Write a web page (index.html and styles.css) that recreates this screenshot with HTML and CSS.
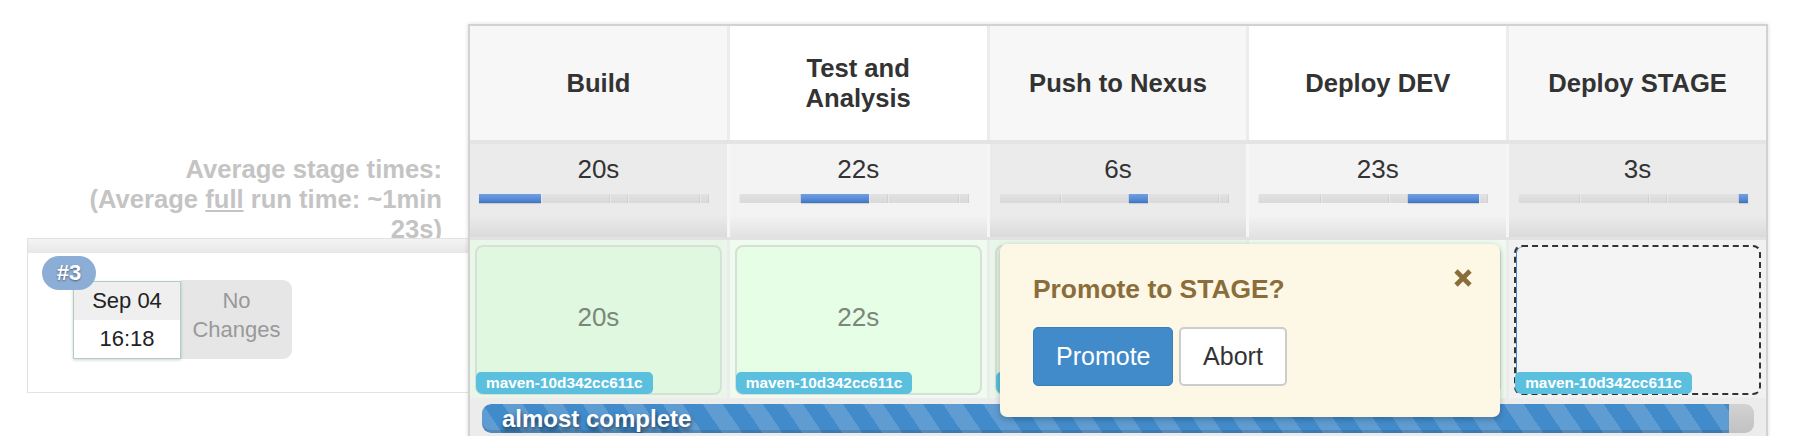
FILE: index.html
```html
<!DOCTYPE html>
<html>
<head>
<meta charset="utf-8">
<link rel="stylesheet" href="styles.css">
</head>
<body>
<div class="page">
  <div class="side">
    <div class="side-label">
      <div>Average stage times:</div>
      <div>(Average <span class="u">full</span> run time: ~1min 23s)</div>
    </div>
    <div class="run">
      <span class="run-badge">#3</span>
      <div class="run-body">
        <div class="date">
          <div class="date-day">Sep 04</div>
          <div class="date-time">16:18</div>
        </div>
        <div class="changes">No<br>Changes</div>
      </div>
    </div>
  </div>

  <div class="table">
    <div class="row head">
      <div class="hcell odd">Build</div>
      <div class="hcell even">Test and Analysis</div>
      <div class="hcell odd">Push to Nexus</div>
      <div class="hcell even">Deploy DEV</div>
      <div class="hcell odd">Deploy STAGE</div>
    </div>

    <div class="row times">
      <div class="tcell odd">
        <div class="tval">20s</div>
        <div class="track"><span class="seg cur" style="flex:20"></span><span class="seg" style="flex:22"></span><span class="seg" style="flex:6"></span><span class="seg" style="flex:23"></span><span class="seg" style="flex:3"></span></div>
      </div>
      <div class="tcell even">
        <div class="tval">22s</div>
        <div class="track"><span class="seg" style="flex:20"></span><span class="seg cur" style="flex:22"></span><span class="seg" style="flex:6"></span><span class="seg" style="flex:23"></span><span class="seg" style="flex:3"></span></div>
      </div>
      <div class="tcell odd">
        <div class="tval">6s</div>
        <div class="track"><span class="seg" style="flex:20"></span><span class="seg" style="flex:22"></span><span class="seg cur" style="flex:6"></span><span class="seg" style="flex:23"></span><span class="seg" style="flex:3"></span></div>
      </div>
      <div class="tcell even">
        <div class="tval">23s</div>
        <div class="track"><span class="seg" style="flex:20"></span><span class="seg" style="flex:22"></span><span class="seg" style="flex:6"></span><span class="seg cur" style="flex:23"></span><span class="seg" style="flex:3"></span></div>
      </div>
      <div class="tcell odd">
        <div class="tval">3s</div>
        <div class="track"><span class="seg" style="flex:20"></span><span class="seg" style="flex:22"></span><span class="seg" style="flex:6"></span><span class="seg" style="flex:23"></span><span class="seg cur" style="flex:3"></span></div>
      </div>
    </div>

    <div class="row cells">
      <div class="ccell odd"><div class="card ok"><span class="card-time">20s</span><span class="agent">maven-10d342cc611c</span></div></div>
      <div class="ccell even"><div class="card ok"><span class="card-time">22s</span><span class="agent">maven-10d342cc611c</span></div></div>
      <div class="ccell odd"><div class="card ok"><span class="card-time">6s</span><span class="agent">maven-10d342cc611c</span></div></div>
      <div class="ccell even"><div class="card ok"><span class="card-time">23s</span><span class="agent">maven-10d342cc611c</span></div></div>
      <div class="ccell pending-cell"><div class="card pending"><span class="agent">maven-10d342cc611c</span></div></div>
    </div>

    <div class="row barrow">
      <div class="progress">
        <div class="progress-fill" style="width:98%"><span class="progress-text">almost complete</span></div>
      </div>
    </div>

    <div class="popup">
      <div class="popup-title">Promote to STAGE?</div>
      <div class="popup-buttons">
        <button class="btn btn-primary">Promote</button>
        <button class="btn btn-default">Abort</button>
      </div>
      <svg class="popup-close" width="20" height="20" viewBox="0 0 20 20"><path d="M3 3 L17 17 M17 3 L3 17" stroke="#8a6d3b" stroke-width="4.6" fill="none"/></svg>
    </div>
  </div>
</div>
</body>
</html>
```

FILE: styles.css
```css
* { box-sizing: border-box; }
html, body { margin: 0; padding: 0; background: #fff; }
body {
  font-family: "Liberation Sans", Arial, sans-serif;
  color: #333;
  overflow: hidden;
  width: 1808px;
  height: 436px;
}

.page {
  display: flex;
  align-items: flex-start;
  padding-top: 24px;
}

/* left side */
.side {
  width: 468px;
  flex: none;
  padding-top: 130px;
}
.side-label {
  width: 380px;
  height: 84px;
  margin-left: auto;
  margin-right: 26px;
  text-align: right;
  font-weight: bold;
  font-size: 25.6px;
  line-height: 30px;
  color: #c4c4c4;
}
.side-label .u { text-decoration: underline; }

.run {
  position: relative;
  margin-left: 27px;
  width: 441px;
  height: 155px;
  border: 1px solid #e2e2e2;
  border-right: none;
  background: linear-gradient(#f4f4f4, #e7e7e7) top left / 100% 14px no-repeat, #fff;
}
.run-badge {
  position: absolute;
  left: 14px;
  top: 17px;
  width: 54px;
  height: 34px;
  border-radius: 17px;
  background: #8cadd5;
  color: #fff;
  font-weight: bold;
  font-size: 22px;
  line-height: 34px;
  text-align: center;
  text-shadow: 0 1px 2px rgba(0,0,0,.45);
  z-index: 2;
}
.run-body {
  display: flex;
  align-items: flex-start;
  padding-top: 42px;
  padding-left: 45px;
}
.date {
  width: 108px;
  border: 1px solid #a8d2ba;
  box-shadow: 0 1px 3px rgba(0,0,0,.18);
  font-size: 22px;
  text-align: center;
  color: #222;
  position: relative;
  z-index: 1;
}
.date-day {
  height: 38px;
  line-height: 38px;
  background: #efefef;
}
.date-time {
  height: 38px;
  line-height: 38px;
  background: #fff;
}
.changes {
  width: 111px;
  height: 79px;
  margin-top: -1px;
  padding-bottom: 10px;
  background: #e6e6e6;
  border-radius: 0 9px 9px 0;
  color: #999;
  font-size: 22px;
  line-height: 29px;
  text-align: center;
  display: flex;
  flex-direction: column;
  justify-content: center;
}

/* stage table */
.table {
  position: relative;
  width: 1300px;
  flex: none;
  border: 2px solid #d2d2d2;
  border-bottom: none;
  box-shadow: 0 0 4px rgba(0,0,0,.15);
  background: #ececec;
}
.row {
  display: grid;
  grid-template-columns: repeat(5, 1fr);
  column-gap: 3px;
}

.head {
  height: 118px;
  border-bottom: 4px solid #e4e4e4;
  background: #ececec;
}
.hcell {
  display: flex;
  align-items: center;
  justify-content: center;
  text-align: center;
  padding: 0 30px;
  font-weight: bold;
  font-size: 25.6px;
  line-height: 30px;
  color: #333;
}
.hcell.odd { background: #f7f7f7; }
.hcell.even { background: #fff; }

.times {
  height: 96px;
  border-bottom: 3px solid #e2e2e2;
  background: #f6f6f6;
}
.tcell {
  padding-top: 10px;
  background-image: linear-gradient(to bottom, rgba(0,0,0,0) 76%, rgba(0,0,0,.07));
}
.tcell.odd { background-color: #ebebeb; }
.tcell.even { background-color: #f3f3f3; }
.tval {
  text-align: center;
  font-size: 26px;
  line-height: 30px;
  color: #333;
}
.track {
  display: flex;
  width: 230px;
  height: 9px;
  margin-top: 10px;
  margin-left: 9px;
}
.seg {
  display: block;
  height: 9px;
  background: linear-gradient(#e2e2e2, #d9d9d9);
  box-shadow: inset -1px 0 0 rgba(0,0,0,.05), inset 1px 0 0 rgba(255,255,255,.35);
}
.seg.cur {
  background: linear-gradient(#729fe0, #5186d4 70%, #3f6fbf);
  box-shadow: 0 1px 1px rgba(0,0,0,.12);
}

.cells {
  height: 158px;
  background: #ececec;
}
.ccell {
  padding: 5px 5px 3px 5px;
}
.ccell.odd { background: #e9f7e9; }
.ccell.even { background: #eefbee; }
.ccell.pending-cell { background: #f1f1f1; }
.card {
  position: relative;
  height: 100%;
  border-radius: 8px;
  display: flex;
  align-items: center;
  justify-content: center;
  padding-bottom: 6px;
}
.card.ok {
  border: 2px solid #d8dfd8;
}
.ccell.odd .card { background: #e0f7e0; }
.ccell.even .card { background: #e6fde6; }
.card.pending {
  background: #f4f4f4;
  border: 2px dashed #333;
  box-shadow: inset 1px 0 0 #4a86c8;
}
.card-time {
  font-size: 26px;
  color: #7a877a;
}
.agent {
  position: absolute;
  left: -1px;
  bottom: -1px;
  height: 22px;
  padding: 0 10px;
  background: #5bc0de;
  color: #fff;
  font-weight: bold;
  font-size: 15.4px;
  line-height: 22px;
  border-radius: 5px 5px 5px 7px;
  white-space: nowrap;
}

.barrow {
  display: block;
  padding: 6px 12px;
  background: #ececec;
}
.progress {
  height: 29px;
  border-radius: 9px;
  background: linear-gradient(#d2d2d2, #c2c2c2);
  overflow: hidden;
}
.progress-fill {
  height: 29px;
  border-radius: 9px 0 0 9px;
  background-color: #428bca;
  background-image: repeating-linear-gradient(56deg, rgba(255,255,255,.15) 0, rgba(255,255,255,.15) 16.6px, rgba(255,255,255,0) 16.6px, rgba(255,255,255,0) 33.2px);
  box-shadow: inset 0 -3px 0 rgba(0,0,0,.12);
  padding-left: 20px;
}
.progress-text {
  display: block;
  color: #fff;
  font-weight: bold;
  font-size: 24px;
  line-height: 29px;
  text-shadow: 1px 3px 4px rgba(0,0,0,.6);
  white-space: nowrap;
}

/* popover */
.popup {
  position: absolute;
  left: 530px;
  top: 218px;
  width: 500px;
  height: 173px;
  background: #fcf8e5;
  border-radius: 7px;
  box-shadow: 0 2px 6px rgba(0,0,0,.25);
  padding: 30px 33px;
  z-index: 5;
}
.popup-title {
  font-weight: bold;
  font-size: 26.4px;
  line-height: 30px;
  color: #8a6d3b;
}
.popup-buttons {
  display: flex;
  gap: 6px;
  margin-top: 23px;
}
.btn {
  height: 59px;
  padding: 0 22px;
  font-family: "Liberation Sans", Arial, sans-serif;
  font-size: 25px;
  border-radius: 5px;
  cursor: pointer;
}
.btn-primary {
  width: 140px;
  background: #428bca;
  border: 1px solid #3a7ebf;
  color: #fff;
}
.btn-default {
  width: 108px;
  background: #fff;
  border: 2px solid #ccc;
  color: #333;
}
.popup-close {
  position: absolute;
  right: 27px;
  top: 24px;
}
```
